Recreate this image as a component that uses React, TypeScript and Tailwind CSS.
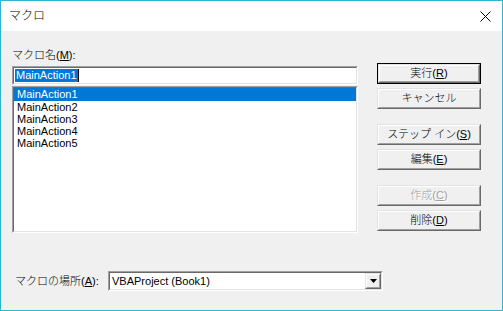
const Mn = ({ c }: { c: string }) => <span className="underline underline-offset-1">{c}</span>;

const Btn = ({
  children,
  primary,
  disabled,
  className = "",
}: {
  children: React.ReactNode;
  primary?: boolean;
  disabled?: boolean;
  className?: string;
}) => (
  <div
    className={`w-[104px] h-[21px] ${primary ? "border border-black" : ""} ${className}`}
  >
    <div className="h-full w-full border border-t-[#e3e3e3] border-l-[#e3e3e3] border-r-[#696969] border-b-[#696969]">
      <div
        className={`h-full w-full border border-t-white border-l-white border-r-[#a0a0a0] border-b-[#a0a0a0] flex items-center justify-center leading-none ${
          disabled ? "text-[#a0a0a0] [text-shadow:1px_1px_0_#fff]" : "text-black"
        }`}
      >
        {children}
      </div>
    </div>
  </div>
);

const Sunken = ({ children, className = "" }: { children: React.ReactNode; className?: string }) => (
  <div
    className={`border border-t-[#a0a0a0] border-l-[#a0a0a0] border-r-white border-b-white ${className}`}
  >
    <div className="h-full w-full border border-t-[#696969] border-l-[#696969] border-r-[#e3e3e3] border-b-[#e3e3e3] bg-white overflow-hidden">
      {children}
    </div>
  </div>
);

const macros = ["MainAction1", "MainAction2", "MainAction3", "MainAction4", "MainAction5"];

export default function App() {
  return (
    <div className="w-[503px] h-[311px] border border-[#2fb5d0] flex flex-col text-[11px] font-light text-black [font-family:'Liberation_Sans','Noto_Sans_CJK_JP',sans-serif]">
      <div className="h-[30px] bg-white flex items-center justify-between pl-[8px] pr-[10px] shrink-0">
        <span className="text-[12px]">マクロ</span>
        <svg width="11" height="11" viewBox="0 0 11 11" className="mr-[1px]">
          <path d="M0.5 0.5 L10.5 10.5 M10.5 0.5 L0.5 10.5" stroke="#000" strokeWidth="1" />
        </svg>
      </div>
      <div className="flex-1 bg-[#f0f0f0] pl-[11px] pt-[18px]">
        <div className="flex items-start">
          <div className="w-[346px]">
            <div className="h-[13px] leading-[13px]">
              マクロ名(<Mn c="M" />):
            </div>
            <Sunken className="mt-[4px] h-[19px]">
              <div className="flex items-center h-full pl-[1px]">
                <span className="bg-[#0078d7] text-white leading-[13px] h-[13px] px-[1px]">MainAction1</span>
                <span className="w-px h-[13px] bg-black" />
              </div>
            </Sunken>
            <Sunken className="mt-[1px] h-[147px]">
              <div>
                {macros.map((m, i) => (
                  <div
                    key={m}
                    className={`pl-[3px] ${
                      i === 0 ? "bg-[#0078d7] text-white h-[13px] leading-[13px]" : "h-[12px] leading-[12px]"
                    }`}
                  >
                    {m}
                  </div>
                ))}
              </div>
            </Sunken>
          </div>
          <div className="ml-[19px] mt-[14px] flex flex-col">
            <Btn primary>
              実行(<Mn c="R" />)
            </Btn>
            <Btn className="mt-[4px]">キャンセル</Btn>
            <Btn className="mt-[15px]">
              ステップ イン(<Mn c="S" />)
            </Btn>
            <Btn className="mt-[4px]">
              編集(<Mn c="E" />)
            </Btn>
            <Btn disabled className="mt-[15px]">
              作成(<Mn c="C" />)
            </Btn>
            <Btn className="mt-[4px]">
              削除(<Mn c="D" />)
            </Btn>
          </div>
        </div>
        <div className="flex items-center mt-[38px]">
          <div className="w-[96px] pl-[3px]">
            マクロの場所(<Mn c="A" />):
          </div>
          <Sunken className="w-[275px] h-[20px]">
            <div className="flex items-center h-full">
              <span className="flex-1 pl-[2px] leading-[13px]">VBAProject (Book1)</span>
              <div className="w-[16px] h-[16px] border border-t-[#e3e3e3] border-l-[#e3e3e3] border-r-[#696969] border-b-[#696969]">
                <div className="h-full w-full border border-t-white border-l-white border-r-[#a0a0a0] border-b-[#a0a0a0] bg-[#f0f0f0] flex items-center justify-center">
                  <svg width="7" height="4" viewBox="0 0 7 4">
                    <path d="M0 0 H7 L3.5 4 Z" fill="#000" />
                  </svg>
                </div>
              </div>
            </div>
          </Sunken>
        </div>
      </div>
    </div>
  );
}
